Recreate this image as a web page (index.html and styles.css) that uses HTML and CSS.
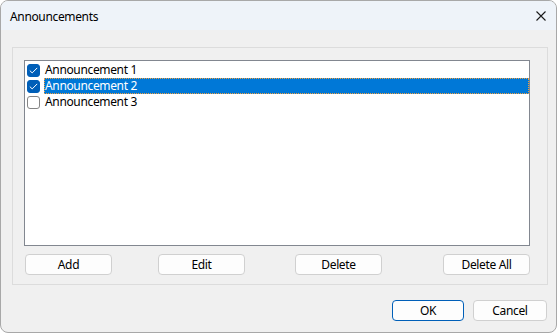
FILE: index.html
```html
<!DOCTYPE html>
<html lang="en">
<head>
    <meta charset="UTF-8">
    <title>Announcements</title>
    <link rel="stylesheet" href="styles.css">
</head>
<body>
    <div class="window">
        <div class="titlebar">
            <span class="title">Announcements</span>
            <svg class="close" width="10" height="10" viewBox="0 0 10 10">
                <path d="M0.5 0.5 L9.5 9.5 M9.5 0.5 L0.5 9.5" stroke="#1a1a1a" stroke-width="1.1" fill="none"/>
            </svg>
        </div>
        <div class="content">
            <div class="group">
                <div class="listbox">
                    <div class="item">
                        <span class="check checked">
                            <svg width="9" height="7" viewBox="0 0 9 7"><path d="M0.8 3.6 L3.2 5.9 L8.2 0.9" stroke="#fff" stroke-width="1" fill="none"/></svg>
                        </span>
                        <span class="label">Announcement 1</span>
                    </div>
                    <div class="item">
                        <span class="check checked">
                            <svg width="9" height="7" viewBox="0 0 9 7"><path d="M0.8 3.6 L3.2 5.9 L8.2 0.9" stroke="#fff" stroke-width="1" fill="none"/></svg>
                        </span>
                        <span class="label selected">Announcement 2</span>
                    </div>
                    <div class="item">
                        <span class="check"></span>
                        <span class="label">Announcement 3</span>
                    </div>
                </div>
                <div class="actions">
                    <button class="btn btn-add">Add</button>
                    <button class="btn btn-edit">Edit</button>
                    <button class="btn btn-delete">Delete</button>
                    <button class="btn btn-delete-all">Delete All</button>
                </div>
            </div>
            <div class="footer">
                <button class="btn btn-ok">OK</button>
                <button class="btn btn-cancel">Cancel</button>
            </div>
        </div>
    </div>
</body>
</html>
```

FILE: styles.css
```css
body {
    margin: 0;
    background: #ffffff;
    font-family: "Noto Sans", "Open Sans", sans-serif;
    font-size: 12px;
    letter-spacing: -0.35px;
    color: #000;
}
.window {
    width: 557px;
    height: 333px;
    box-sizing: border-box;
    border: 1px solid #a8a8a8;
    border-radius: 8px;
    overflow: hidden;
    background: #f0f0f0;
    display: flex;
    flex-direction: column;
}
.titlebar {
    height: 29px;
    background: #eef3f9;
    display: flex;
    align-items: center;
    justify-content: space-between;
    padding: 0 9px 0 9px;
}
.title {
    font-size: 12px;
    padding-top: 1px;
}
.close {
    margin-right: 1px;
}
.content {
    flex: 1;
    padding: 17px 0 0 11px;
}
.group {
    width: 536px;
    height: 238px;
    box-sizing: border-box;
    border: 1px solid #dcdcdc;
    padding: 12px 0 0 11px;
}
.listbox {
    width: 506px;
    height: 186px;
    box-sizing: border-box;
    border: 1px solid #828790;
    background: #fff;
    padding-top: 1px;
}
.item {
    height: 16px;
    display: flex;
    align-items: center;
}
.check {
    width: 13px;
    height: 13px;
    box-sizing: border-box;
    margin-left: 2px;
    margin-right: 4px;
    border: 1px solid #858585;
    border-radius: 3px;
    background: #fff;
    display: flex;
    align-items: center;
    justify-content: center;
}
.check.checked {
    background: #005fb8;
    border-color: #005fb8;
}
.label {
    flex: 1;
    height: 16px;
    line-height: 16px;
    padding-left: 1px;
}
.label.selected {
    background: #0078d7;
    color: #fff;
    outline: 1px dotted #f0a040;
    outline-offset: -1px;
}
.actions {
    display: flex;
    margin-top: 8px;
    padding-left: 1px;
}
.btn {
    height: 21px;
    box-sizing: border-box;
    background: #fdfdfd;
    border: 1px solid #d0d0d0;
    border-radius: 4px;
    font-family: inherit;
    font-size: 12px;
    letter-spacing: -0.35px;
    color: #000;
    padding: 0;
}
.actions .btn {
    width: 87px;
}
.btn-edit {
    margin-left: 46px;
}
.btn-delete {
    margin-left: 50px;
}
.btn-delete-all {
    margin-left: 61px;
}
.footer {
    display: flex;
    justify-content: flex-end;
    gap: 9px;
    margin-top: 15px;
    padding-right: 9px;
}
.btn-ok {
    width: 72px;
    border-color: #005fb8;
}
.btn-cancel {
    width: 74px;
}
```
